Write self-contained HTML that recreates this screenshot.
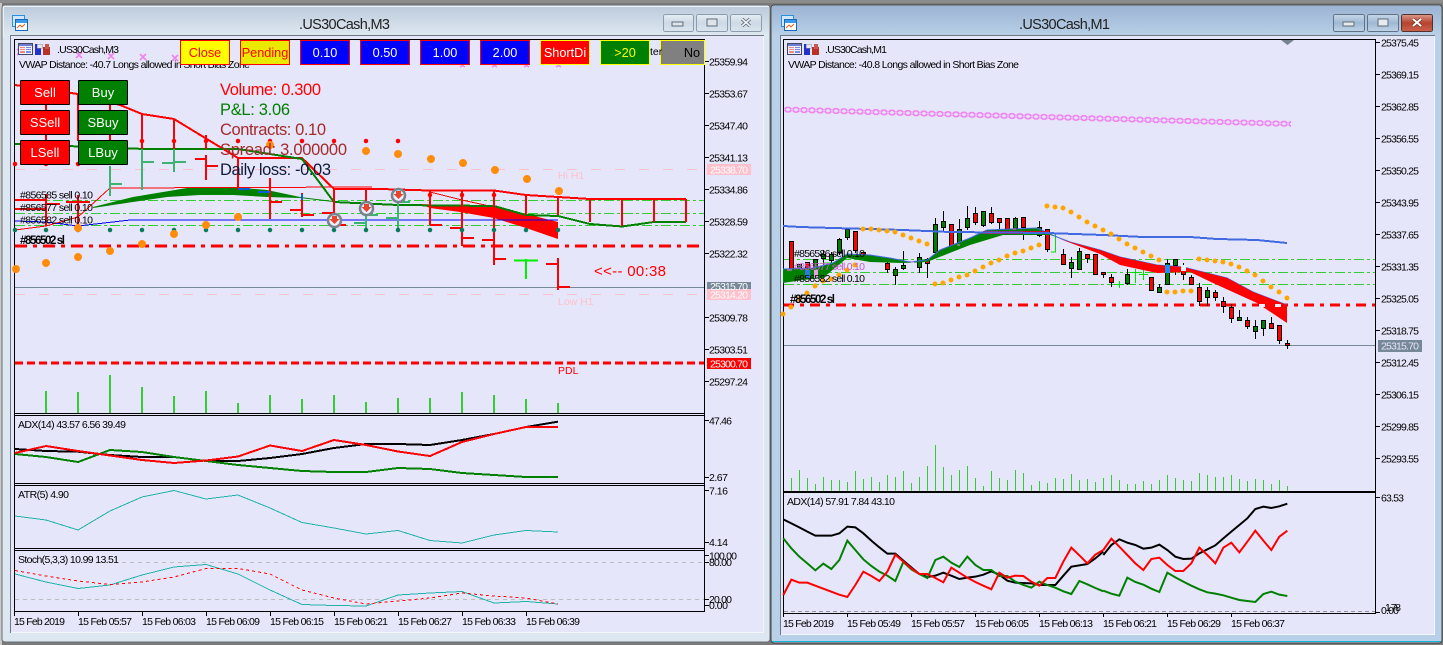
<!DOCTYPE html>
<html><head><meta charset="utf-8"><title>.US30Cash charts</title>
<style>
html,body{margin:0;padding:0;background:#6e6e6e;width:1443px;height:645px;overflow:hidden}
svg{display:block}
text{font-family:"Liberation Sans",sans-serif;font-size:10.5px;fill:#000}
.ax{font-size:10.5px}
.big{font-size:16.5px}
.btn{font-size:12.7px;text-anchor:middle}
.sb{font-size:13px;text-anchor:middle;fill:#fff}
.ti{font-size:14.5px;fill:#222}
.c{shape-rendering:crispEdges}
</style></head><body>
<svg width="1443" height="645" viewBox="0 0 1443 645" xmlns="http://www.w3.org/2000/svg">
<defs>
<linearGradient id="t1" x1="0" y1="0" x2="0" y2="1"><stop offset="0" stop-color="#bccadb"/><stop offset="1" stop-color="#dfe8f1"/></linearGradient>
<linearGradient id="t2" x1="0" y1="0" x2="0" y2="1"><stop offset="0" stop-color="#9bb4d2"/><stop offset="1" stop-color="#b9d0e8"/></linearGradient>
<linearGradient id="b1" x1="0" y1="0" x2="0" y2="1"><stop offset="0" stop-color="#e6edf4"/><stop offset=".5" stop-color="#cdd9e5"/><stop offset="1" stop-color="#dbe5ee"/></linearGradient>
<linearGradient id="b2" x1="0" y1="0" x2="0" y2="1"><stop offset="0" stop-color="#c8d8e9"/><stop offset=".5" stop-color="#9fb8d3"/><stop offset="1" stop-color="#c0d4e8"/></linearGradient>
<linearGradient id="b3" x1="0" y1="0" x2="0" y2="1"><stop offset="0" stop-color="#d99a8c"/><stop offset=".5" stop-color="#b8422e"/><stop offset="1" stop-color="#c9634e"/></linearGradient>
<pattern id="xp" width="8" height="6" patternUnits="userSpaceOnUse"><path d="M.5 .5L7.500 5.500M7.500 .5L.5 5.500" stroke="#ee82ee" stroke-width="1.800" fill="none"/></pattern>
</defs>

<!-- desktop edges -->
<rect width="1443" height="645" fill="#7a7a7a"/>
<rect y="0" width="1443" height="3" fill="#8c8c8c"/>
<rect x="0" y="3" width="2" height="642" fill="#c9c9c9"/>

<!-- LEFT WINDOW -->
<rect x="2" y="5" width="768" height="637" rx="3" fill="#dde7f1" stroke="#6b7076"/>
<rect x="3" y="6" width="766" height="30" fill="url(#t1)"/>
<path class="c" d="M3.500 37V6.500H769" stroke="#eef2f6" fill="none"/>
<rect x="10" y="35" width="754" height="598" fill="#e6e6fa"/>
<path class="c" d="M10.500 633V35.500H764" stroke="#6f7780" fill="none"/>
<path class="c" d="M763.500 36V632.500H11" stroke="#f4f6f8" fill="none"/>
<text class="ti" x="299" y="29" textLength="91">.US30Cash,M3</text>
<g class="c">
<rect x="12.500" y="15.500" width="12" height="11" fill="#cfe6fb" stroke="#2b8fe0"/>
<rect x="15.500" y="19.500" width="12" height="11" fill="#fff" stroke="#1769c0"/>
<rect x="16" y="20" width="11" height="3" fill="#3c9ae8"/>
</g>
<path d="M17 28l3-3 2 2 3-3" stroke="#e8641e" fill="none"/>
<g class="c" stroke="#8b9cae" fill="url(#b1)">
<rect x="663.500" y="14.500" width="30" height="17" rx="2"/>
<rect x="696.500" y="14.500" width="31" height="17" rx="2"/>
<rect x="730.500" y="14.500" width="31" height="17" rx="2"/>
</g>
<rect x="672" y="22" width="11" height="4" fill="#dfe4ea" stroke="#5e6b78"/>
<rect x="707" y="19" width="10" height="7" fill="#dfe4ea" stroke="#5e6b78"/>
<path d="M742 19l8 7M750 19l-8 7" stroke="#5e6b78" stroke-width="3.2"/>
<path d="M742 19l8 7M750 19l-8 7" stroke="#f0f2f5" stroke-width="1.6"/>

<!-- left chart frame -->
<g class="c" fill="none" stroke="#000">
<path d="M14.500 611.500V39.500H704.500V611.500H14.500"/>
<path d="M15 413.500H704M15 415.500H704M15 483.500H704M15 485.500H704M15 548.500H704M15 550.500H704"/>
<path d="M704 61.500h5M704 93.500h5M704 125.500h5M704 157.500h5M704 189.500h5M704 221.500h5M704 253.500h5M704 317.500h5M704 349.500h5M704 381.500h5M704 420.500h5M704 477.500h5M704 490.500h5M704 542.500h5M704 555.500h5M704 562.500h5M704 599.500h5M704 605.500h5"/>
<path d="M14.500 611v5M78.500 611v5M142.500 611v5M206.500 611v5M270.500 611v5M334.500 611v5M398.500 611v5M462.500 611v5M526.500 611v5"/>
</g>
<path d="M552 40h13l-6.500 5z" fill="#77838f"/>

<!-- left levels -->
<g class="c" fill="none">
<path d="M15 169.500H704M15 294.500H704" stroke="#ffc0cb" stroke-dasharray="10 14"/>
<path d="M15 200.500H704M15 213.500H704M15 225.500H704" stroke="#32cd32" stroke-dasharray="10 3 3 3"/>
<path d="M15 287.500H704" stroke="#778899"/>
<path d="M15 246H704" stroke="#f00" stroke-width="3" stroke-dasharray="12 6 4 6"/>
<path d="M15 363H704" stroke="#f00" stroke-width="3" stroke-dasharray="8 4"/>
<path d="M46 413V391M78 413V392M110 413V375M142 413V387M174 413V396M206 413V391M238 413V403M270 413V395M302 413V399M334 413V395M366 413V402M398 413V398M430 413V398M462 413V392M494 413V395M526 413V399M558 413V403" stroke="#32cd32" stroke-width="2"/>
</g>

<!-- left pink x marks -->
<path d="M17 49l6 6M23 49l-6 6M76 52l6 6M82 52l-6 6M108 53l6 6M114 53l-6 6M140 54l6 6M146 54l-6 6M172 55l6 6M178 55l-6 6M460 64l5 3M465 64l-5 3M492 64l5 3M497 64l-5 3M524 64l5 3M529 64l-5 3M556 64l5 3M561 64l-5 3" stroke="#ee82ee" stroke-width="1.600" fill="none"/>

<!-- left ribbons + MAs -->
<path d="M93 207L133 197L187 188L233 187L267 190L300 197L333 201L333 202L300 198L267 197L233 195L200 195L167 197L133 202L93 208z" fill="#008000"/>
<path d="M420 204L494 207L526 214L558 222L558 239L526 228L494 218L460 212L430 208z" fill="#f00"/>
<g fill="none" class="c">
<path d="M15 230L46 226L78 217L110 188L372 187" stroke="#f00"/>
<path d="M430 192L462 200L494 207" stroke="#f00"/>
<path d="M15 221L46 222L78 226L130 220H558" stroke="#00f"/>
<path d="M15 85L78 94L120 105L142 114L174 119L238 158H302L334 189H380L430 190.500H494L526 195L558 197L590 199H686" stroke="#f00" stroke-width="2"/>
<path d="M15 144L145 149L238 149L270 154L302 159L334 202L398 205L494 206L526 215L558 216L590 224L622 226.500L654 222H686" stroke="#008000" stroke-width="2"/>
<path d="M334 201V189M366 201V189" stroke="#f00" stroke-width="2"/>
<!-- red bars -->
<path stroke="#f00" stroke-width="2" d="M46 105V141M78 93V141M110 105V141M142 114V149M174 119V149M206 135V149M206 155V180M195 159H206M206 166H218M238 157V190M270 178V219M270 202H282M302 193V217M290 210H302M302 215H314M334 189V225M322 213H334M334 225H346M46 194V226M15 200H46M15 209H46M46 204H60M78 195V230M66 202H90M430 190V225M430 225H442M462 190V246M450 228H462M462 238H474M494 190V265M482 240H494M494 259H506M526 195V215M558 197V215M590 199V222M622 199V226M654 199V222M686 199V222M558 258V290M546 264H558M558 287H570"/>
<path stroke="#0b5fd6" stroke-width="2" d="M238 189H250M258 192H270M302 194V200"/>
<!-- green bars -->
<path stroke="#3cb371" stroke-width="2" d="M110 166V196M110 184H122M142 149V190M142 162H154M174 149V172M162 163H174M174 162H186M366 205V230M354 223H366M366 215H378M398 190V230M386 218H398M398 202H410"/>
<path stroke="#00ee00" stroke-width="2" d="M526 259V279M514 260.500H538"/>
</g>
<!-- left dots -->
<g fill="none" stroke-linecap="round">
<path stroke="#f00" stroke-width="4.500" d="M142 141h0M174 141h0M206 141h0M238 141h0M270 141h0M302 141h0M334 141h0M366 141h0M398 141h0M15 164h0M46 164h0M78 164h0M430 195h0M462 195h0M494 195h0"/>
<path stroke="#087b5a" stroke-width="4.500" d="M15 230h0M46 230h0M78 230h0M110 230h0M142 230h0M174 230h0M206 230h0M238 230h0M270 230h0M302 230h0M334 230h0M366 230h0M398 230h0M430 230h0M462 230h0M494 230h0M526 230h0M558 230h0"/>
<path stroke="#ff8c0a" stroke-width="8" d="M16 269h0M46 263h0M78 257h0M110 251h0M142 244h0M174 234h0M206 225h0M238 217h0M78 228h0M270 145h0M366 151h0M398 154h0M431 159h0M463 163h0M495 170h0M527 179h0M559 191h0"/>
</g>
<!-- sell markers -->
<g>
<circle cx="334.500" cy="220.500" r="6.500" fill="#eef" stroke="#77838f" stroke-width="2.500"/><path d="M332 216h5v3h2.500l-5 5-5-5h2.500z" fill="#e8452a"/>
<circle cx="366.500" cy="208.500" r="6.500" fill="#eef" stroke="#77838f" stroke-width="2.500"/><path d="M364 204h5v3h2.500l-5 5-5-5h2.500z" fill="#e8452a"/>
<circle cx="398.500" cy="195.500" r="6.500" fill="#eef" stroke="#77838f" stroke-width="2.500"/><path d="M396 191h5v3h2.500l-5 5-5-5h2.500z" fill="#e8452a"/>
</g>

<!-- left sub windows -->
<g fill="none" stroke-width="2" class="c">
<path stroke="#000" d="M15 449L46 451L78 451.700L110 455L142 457L174 457L206 461L238 461L270 458L302 454L334 448L366 444H398L430 445L462 440L494 434L526 427L558 421.700"/>
<path stroke="#008000" d="M15 454L46 457L78 462L110 450L142 452L174 457L206 461L238 465L270 468L302 471L334 472H366L398 468L430 469L462 473L494 475L526 477H558"/>
<path stroke="#f00" d="M15 453L46 446L78 451L110 455.500L142 460L174 463L206 460.500L238 456.500L270 445.500L302 451L334 440L366 445L398 451.500L430 456L462 442L494 434L526 427H558"/>
</g>
<path class="c" fill="none" stroke="#20b2aa" d="M15 516L46 520L78 530L110 511L142 497L174 490.500L206 499L238 495L270 508L302 522.500L334 528L366 534L398 530.500L430 540.500L462 543L494 535L526 530.500L558 532"/>
<path class="c" fill="none" stroke="#bdbdbd" stroke-dasharray="4 4" d="M122 562.500H704M15 599.500H704"/>
<path class="c" fill="none" stroke="#20b2aa" d="M15 574L46 582L78 588.500L110 585L142 575L174 567L206 564.500L238 574L270 590L302 604.500L334 605.500L366 606L398 595L430 593L462 591.500L494 603L526 601.500L558 604"/>
<path class="c" fill="none" stroke="#f00" stroke-dasharray="3 3" d="M15 570.500L46 576L78 581L110 584.500L142 582L174 577L206 568.500H238L270 574L302 590L334 598L366 604L398 601L430 598L462 593L494 596L526 598L558 604"/>

<!-- left text -->
<text x="57" y="53" textLength="62">.US30Cash,M3</text>
<text x="19" y="68" textLength="231">VWAP Distance: -40.7 Longs allowed in Short Bias Zone</text>
<text x="20" y="198.500" textLength="73">#856585 sell 0.10</text>
<text x="20" y="211" textLength="73">#856577 sell 0.10</text>
<text x="20" y="223.500" textLength="73">#856582 sell 0.10</text>
<text x="20" y="244" textLength="45" style="font-weight:bold;font-size:11.5px">#856502 sl</text>
<text class="big" x="220" y="95" fill="#f00" style="fill:#f00" textLength="101">Volume: 0.300</text>
<text class="big" x="220" y="115" style="fill:#008000" textLength="70">P&amp;L: 3.06</text>
<text class="big" x="220" y="135" style="fill:#a52a2a" textLength="106">Contracts: 0.10</text>
<text class="big" x="220" y="155" style="fill:#a52a2a" textLength="127">Spread: 3.000000</text>
<text class="big" x="220" y="175" style="fill:#111a3a" textLength="111">Daily loss: -0.03</text>
<text x="594" y="276" style="fill:#f00;font-size:15px" textLength="72">&lt;&lt;-- 00:38</text>
<text x="558" y="179" style="fill:#ffc0cb;font-size:10.5px">Hi H1</text>
<text x="558" y="305" style="fill:#ffc0cb;font-size:10.5px">Low H1</text>
<text x="558" y="374" style="fill:#f00;font-size:10.5px">PDL</text>
<text x="18" y="428" textLength="108">ADX(14) 43.57 6.56 39.49</text>
<text x="18" y="498" textLength="51">ATR(5) 4.90</text>
<text x="18" y="563" textLength="101">Stoch(5,3,3) 10.99 13.51</text>
<g>
<text x="14" y="625" textLength="51">15 Feb 2019</text>
<text x="78" y="625" textLength="54">15 Feb 05:57</text>
<text x="142" y="625" textLength="54">15 Feb 06:03</text>
<text x="206" y="625" textLength="54">15 Feb 06:09</text>
<text x="270" y="625" textLength="54">15 Feb 06:15</text>
<text x="334" y="625" textLength="54">15 Feb 06:21</text>
<text x="398" y="625" textLength="54">15 Feb 06:27</text>
<text x="462" y="625" textLength="54">15 Feb 06:33</text>
<text x="526" y="625" textLength="54">15 Feb 06:39</text>
</g>
<g class="c">
<rect x="707" y="164" width="44" height="11" fill="#ffc0cb"/>
<rect x="707" y="282" width="44" height="7" fill="#778899"/>
<rect x="707" y="289" width="44" height="11" fill="#ffc0cb"/>
<rect x="707" y="358" width="44" height="11" fill="#f00"/>
</g>
<g class="ax">
<text x="709" y="65.500" textLength="39">25359.94</text>
<text x="709" y="97.500" textLength="39">25353.67</text>
<text x="709" y="129.500" textLength="39">25347.40</text>
<text x="709" y="161.500" textLength="39">25341.13</text>
<text x="710" y="173.500" textLength="38" style="fill:#fff">25338.70</text>
<text x="709" y="193.500" textLength="39">25334.86</text>
<text x="709" y="225.500" textLength="39">25328.59</text>
<text x="709" y="257.500" textLength="39">25322.32</text>
<text x="710" y="290" textLength="38" style="fill:#fff">25315.70</text>
<text x="710" y="298.500" textLength="38" style="fill:#fff">25314.20</text>
<text x="709" y="321.500" textLength="39">25309.78</text>
<text x="709" y="353.500" textLength="39">25303.51</text>
<text x="710" y="367.500" textLength="38" style="fill:#fff">25300.70</text>
<text x="709" y="385.500" textLength="39">25297.24</text>
<text x="709" y="424.500" textLength="23">47.46</text>
<text x="709" y="481" textLength="19">2.67</text>
<text x="709" y="494.500" textLength="19">7.16</text>
<text x="709" y="546" textLength="19">4.14</text>
<text x="709" y="559.500" textLength="28">100.00</text>
<text x="709" y="566" textLength="23">80.00</text>
<text x="709" y="603" textLength="23">20.00</text>
<text x="709" y="609" textLength="19">0.00</text>
</g>

<!-- chart icons left -->
<g class="c">
<rect x="18.500" y="43.500" width="14" height="11" fill="#eef" stroke="#44446a"/>
<rect x="19" y="44" width="13" height="2" fill="#6f7fd0"/>
<rect x="20" y="47" width="5" height="1" fill="#f08a80"/><rect x="20" y="49" width="5" height="1" fill="#f08a80"/><rect x="20" y="51" width="5" height="2" fill="#f08a80"/>
<rect x="26" y="47" width="5" height="1" fill="#7a8ce0"/><rect x="26" y="49" width="5" height="1" fill="#7a8ce0"/><rect x="26" y="51" width="5" height="2" fill="#7a8ce0"/>
<rect x="35" y="44" width="6" height="11" fill="#2233cc"/><rect x="37" y="44" width="5" height="4" fill="#e6e6fa" stroke="#888" stroke-width=".5"/>
<rect x="43" y="47" width="7" height="8" fill="#b83228"/><rect x="45" y="44" width="4" height="5" fill="#c8584e"/>
</g>

<!-- left buttons -->
<g class="c">
<rect x="20.500" y="80.500" width="49" height="24" rx="1" fill="#f00" stroke="#000"/>
<rect x="20.500" y="110.500" width="49" height="24" rx="1" fill="#f00" stroke="#000"/>
<rect x="20.500" y="140.500" width="49" height="24" rx="1" fill="#f00" stroke="#000"/>
<rect x="78.500" y="80.500" width="49" height="24" rx="1" fill="#008000" stroke="#000"/>
<rect x="78.500" y="110.500" width="49" height="24" rx="1" fill="#008000" stroke="#000"/>
<rect x="78.500" y="140.500" width="49" height="24" rx="1" fill="#008000" stroke="#000"/>
<rect x="180.500" y="40.500" width="49" height="24" fill="#ff0" stroke="#f00"/>
<rect x="240.500" y="40.500" width="49" height="24" fill="#eaea00" stroke="#f00"/>
<rect x="300.500" y="40.500" width="49" height="24" fill="#00f" stroke="#f00"/>
<rect x="360.500" y="40.500" width="49" height="24" fill="#00f" stroke="#f00"/>
<rect x="420.500" y="40.500" width="49" height="24" fill="#00f" stroke="#f00"/>
<rect x="480.500" y="40.500" width="49" height="24" fill="#00f" stroke="#f00"/>
<rect x="540.500" y="40.500" width="49" height="24" fill="#f00" stroke="#ff0"/>
<rect x="600.500" y="40.500" width="49" height="24" fill="#008000" stroke="#ff0"/>
<rect x="660.500" y="40.500" width="44" height="24" fill="#808080" stroke="#ff0"/>
</g>
<text class="sb" x="45" y="97">Sell</text><text class="sb" x="45" y="127">SSell</text><text class="sb" x="45" y="157">LSell</text>
<text class="sb" x="103" y="97">Buy</text><text class="sb" x="103" y="127">SBuy</text><text class="sb" x="103" y="157">LBuy</text>
<text class="btn" x="205" y="57" style="fill:#f00">Close</text>
<text class="btn" x="265" y="57" style="fill:#f00">Pending</text>
<text class="btn" x="325" y="57" style="fill:#fff">0.10</text>
<text class="btn" x="385" y="57" style="fill:#fff">0.50</text>
<text class="btn" x="445" y="57" style="fill:#fff">1.00</text>
<text class="btn" x="505" y="57" style="fill:#fff">2.00</text>
<text class="btn" x="565" y="57" style="fill:#fff">ShortDi</text>
<text class="btn" x="625" y="57" style="fill:#ff0">&gt;20</text>
<text x="650" y="55" style="font-size:10.5px">ter</text>
<text class="btn" x="692" y="57">No</text>

<!-- RIGHT WINDOW -->
<rect x="771" y="5" width="671" height="638" rx="3" fill="#b9d1e8" stroke="#3e4347"/>
<rect x="772" y="6" width="669" height="30" fill="url(#t2)"/>
<path class="c" d="M772 641.500H1441" stroke="#1ab6d8"/>
<rect x="780" y="35" width="655" height="600" fill="#e6e6fa"/>
<path class="c" d="M780.500 635V35.500H1435" stroke="#6f7780" fill="none"/>
<path class="c" d="M1434.500 36V634.500H781" stroke="#f4f6f8" fill="none"/>
<text class="ti" x="1019" y="29" textLength="91">.US30Cash,M1</text>
<g class="c">
<rect x="781.500" y="15.500" width="12" height="11" fill="#cfe6fb" stroke="#2b8fe0"/>
<rect x="784.500" y="19.500" width="12" height="11" fill="#fff" stroke="#1769c0"/>
<rect x="785" y="20" width="11" height="3" fill="#3c9ae8"/>
</g>
<path d="M786 28l3-3 2 2 3-3" stroke="#e8641e" fill="none"/>
<g class="c">
<rect x="1333.500" y="14.500" width="31" height="17" rx="2" fill="url(#b2)" stroke="#5f7288"/>
<rect x="1367.500" y="14.500" width="31" height="17" rx="2" fill="url(#b2)" stroke="#5f7288"/>
<rect x="1401.500" y="14.500" width="31" height="17" rx="2" fill="url(#b3)" stroke="#54312b"/>
</g>
<rect x="1343" y="22" width="11" height="4" fill="#e6ebf1" stroke="#5e6b78"/>
<rect x="1378" y="19" width="10" height="7" fill="#e6ebf1" stroke="#5e6b78"/>
<path d="M1413 19l8 7M1421 19l-8 7" stroke="#6e2f23" stroke-width="3.400"/>
<path d="M1413 19l8 7M1421 19l-8 7" stroke="#fff" stroke-width="2"/>

<g class="c" fill="none" stroke="#000">
<path d="M783.500 613.500V39.500H1375.500V613.500H783.500"/>
<path d="M784 491.500H1375M784 492.500H1375"/>
<path d="M1375 42.500h5M1375 74.500h5M1375 106.500h5M1375 138.500h5M1375 170.500h5M1375 202.500h5M1375 234.500h5M1375 266.500h5M1375 298.500h5M1375 330.500h5M1375 362.500h5M1375 394.500h5M1375 426.500h5M1375 458.500h5M1375 497.500h5M1375 612.500h5"/>
<path d="M783.500 613v4M847.500 613v4M911.500 613v4M975.500 613v4M1039.500 613v4M1103.500 613v4M1167.500 613v4M1231.500 613v4"/>
</g>
<path d="M1281 40h13l-6.500 5z" fill="#77838f"/>

<g class="c" fill="none">
<path d="M784 259.500H1375M784 272.500H1375M784 284.500H1375" stroke="#32cd32" stroke-dasharray="10 3 3 3"/>
<path d="M784 305H1375" stroke="#f00" stroke-width="3" stroke-dasharray="10 6 4 6"/>
<path d="M784 345.500H1375" stroke="#778899"/>
<path d="M784 611.500H1375" stroke="#8f8f9f" stroke-dasharray="4 3"/>
<path stroke="#32cd32" d="M791.500 491V478M799.500 491V470M807.500 491V478M815.500 491V484M823.500 491V477M831.500 491V480M839.500 491V480M847.500 491V482M855.500 491V471M863.500 491V479M871.500 491V477M879.500 491V482M887.500 491V475M895.500 491V477M903.500 491V471M911.500 491V483M919.500 491V477M927.500 491V466M935.500 491V445M943.500 491V467M951.500 491V475M959.500 491V470M967.500 491V466M975.500 491V478M983.500 491V486M991.500 491V471M999.500 491V478M1007.500 491V480M1015.500 491V470M1023.500 491V473M1031.500 491V485M1039.500 491V481M1047.500 491V483M1055.500 491V478M1063.500 491V479M1071.500 491V474M1079.500 491V480M1087.500 491V479M1095.500 491V482M1103.500 491V478M1111.500 491V475M1119.500 491V480M1127.500 491V484M1135.500 491V484M1143.500 491V481M1151.500 491V484M1159.500 491V480M1167.500 491V475M1175.500 491V478M1183.500 491V480M1191.500 491V481M1199.500 491V473M1207.500 491V475M1215.500 491V477M1223.500 491V477M1231.500 491V475M1239.500 491V479M1247.500 491V481M1255.500 491V479M1263.500 491V480M1271.500 491V484M1279.500 491V480M1287.500 491V486"/>
</g>
<!-- pink x band -->
<g transform="translate(784,109.500) skewY(1.63)"><rect x="0" y="-3" width="507" height="6" fill="url(#xp)"/></g>

<!-- candles -->
<path class="c" stroke="#000" fill="none" d="M823.500 250V267M831.500 252V267M839.500 238V255M847.500 229V240M855.500 231V253M887.500 262V273M895.500 267V285M903.500 251V270M919.500 253V273M927.500 258V278M935.500 218V255M943.500 211V231M951.500 224V248M959.500 219V249M967.500 206V230M975.500 207V225M983.500 211V227M991.500 207V224M999.500 218V230M1015.500 217V235M1023.500 217V240M1039.500 221V237M1047.500 229V252M1063.500 249V264M1071.500 257V278M1079.500 248V270M1087.500 254V263M1103.500 272V278M1111.500 274V287M1127.500 269V285M1151.500 277V291M1159.500 284V293M1167.500 259V285M1175.500 259V275M1183.500 263V280M1191.500 275V285M1199.500 283V306M1207.500 287V306M1215.500 290V301M1223.500 297V313M1231.500 304V323M1239.500 310V320M1247.500 317V329M1255.500 320V339M1263.500 320V336M1271.500 317V328M1279.500 325V344M1287.500 340V349"/>
<path class="c" stroke="#000" fill="#008000" d="M797.500 264.500h4v7h-4zM813.500 259.500h4v18h-4zM821.500 254.500h4v4h-4zM829.500 254.500h4v6h-4zM837.500 239.500h4v13h-4zM845.500 229.500h4v8h-4zM893.500 269.500h4v6h-4zM901.500 265.500h4v3h-4zM917.500 257.500h4v10h-4zM933.500 224.500h4v28h-4zM941.500 221.500h4v6h-4zM957.500 229.500h4v16h-4zM965.500 218.500h4v9h-4zM981.500 211.500h4v14h-4zM1013.500 218.500h4v10h-4zM1037.500 227.500h4v8h-4zM1069.500 262.500h4v6h-4zM1077.500 251.500h4v18h-4zM1125.500 274.500h4v9h-4zM1157.500 287.500h4v5h-4zM1165.500 263.500h4v21h-4zM1173.500 259.500h4v6h-4zM1205.500 290.500h4v7h-4zM1237.500 317.500h4v3h-4zM1253.500 326.500h4v5h-4zM1261.500 320.500h4v8h-4z"/>
<path class="c" stroke="#000" fill="#f00" d="M789.500 241.500h4v30h-4zM805.500 262.500h4v15h-4zM853.500 231.500h4v19h-4zM861.500 252.500h4v3h-4zM885.500 263.500h4v6h-4zM925.500 259.500h4v4h-4zM949.500 224.500h4v21h-4zM973.500 213.500h4v9h-4zM989.500 213.500h4v9h-4zM997.500 218.500h4v4h-4zM1005.500 218.500h4v12h-4zM1021.500 217.500h4v10h-4zM1045.500 229.500h4v20h-4zM1061.500 254.500h4v10h-4zM1085.500 254.500h4v4h-4zM1093.500 254.500h4v20h-4zM1101.500 272.500h4v2h-4zM1109.500 277.500h4v5h-4zM1149.500 277.500h4v13h-4zM1181.500 265.500h4v9h-4zM1189.500 277.500h4v7h-4zM1197.500 287.500h4v14h-4zM1213.500 292.500h4v5h-4zM1221.500 301.500h4v5h-4zM1229.500 307.500h4v11h-4zM1245.500 320.500h4v6h-4zM1269.500 323.500h4v5h-4zM1277.500 325.500h4v15h-4zM1285.500 343.500h4v2h-4z"/>
<path class="c" stroke="#00e000" fill="none" d="M1055.500 233V252M1051 252h5M1119.500 281V288M1115 284.500h9M1135.500 269V283M1131 272.500h9M1143.500 270V280M1139 274.500h9M823 263h20"/>

<!-- ribbons -->
<path fill="#008000" d="M783 269L813 268L833 263L847 254L870 255L890 258L910 262L927 260L940 250L970 238L987 230L1037 228L1057 237L1050 235L1003 235L970 245L937 258L927 262L903 263L870 262L847 258L823 278L803 280L783 283z"/>
<path fill="none" stroke="#4169e1" d="M783 269L813 268L833 263L847 254L870 255L890 258L910 262L927 260L940 250L970 238L987 230L1037 228L1057 237L1070 242L1100 250L1120 257L1157 265L1183 267L1227 278L1253 292L1287 305"/>
<path fill="#c8102e" d="M983 231H1047V234H983z"/>
<path fill="#f00" d="M1060 239L1070 242L1100 250L1120 257L1157 265L1183 267L1227 278L1253 292L1287 305V323L1257 303L1213 283L1190 272L1157 273L1120 265L1100 254z"/>
<g class="c">
<rect x="1165" y="265" width="5" height="8" fill="#1e8fff"/>
<rect x="1181" y="265" width="5" height="6" fill="#dff2ff"/>
<rect x="1259" y="304" width="6" height="3" fill="#eef"/>
<rect x="1275" y="304" width="6" height="3" fill="#eef"/>
<rect x="805" y="270" width="5" height="8" fill="#2a7ae8"/>
<rect x="814" y="270" width="4" height="8" fill="#e6a6e6"/>
</g>
<path class="c" fill="none" stroke="#ee82ee" d="M787 270h5M911 262h3M957 245h3M1013 229h3"/>
<!-- blue MA -->
<path class="c" fill="none" stroke="#4169e1" stroke-width="2" d="M783 226L800 227L833 228L903 230L950 232L1047 233L1103 235L1143 237L1190 237L1217 239L1257 240L1287 243"/>
<!-- right orange dots -->
<path fill="none" stroke="#ffa500" stroke-width="5" stroke-linecap="round" d="M783 314h0M791 307h0M799 299h0M807 293h0M815 286h0M823 281h0M831 279h0M839 275h0M847 270h0M855 265h0M863 229h0M871 229h0M879 230h0M887 231h0M895 232h0M903 235h0M911 238h0M919 241h0M927 244h0M935 284h0M943 283h0M951 280h0M959 277h0M967 275h0M975 271h0M983 267h0M991 263h0M999 260h0M1007 256h0M1015 253h0M1023 251h0M1031 248h0M1039 245h0M1047 206h0M1055 207h0M1063 208h0M1071 212h0M1079 217h0M1087 222h0M1095 226h0M1103 230h0M1111 234h0M1119 239h0M1127 244h0M1135 248h0M1143 252h0M1151 256h0M1159 260h0M1167 292h0M1175 292h0M1183 291h0M1191 291h0M1199 259h0M1207 260h0M1215 261h0M1223 262h0M1231 264h0M1239 267h0M1247 271h0M1255 275h0M1263 281h0M1271 287h0M1279 292h0M1287 298h0"/>

<!-- right ADX -->
<g transform="translate(770,430) scale(.33333)" fill="none" stroke-width="6">
<path stroke="#000" d="M40 268L64 280L88 292L112 305L136 317H184L208 310L232 290L256 292L280 310L304 332L328 352L352 371H376L400 392L424 412L448 432L472 441L496 437L520 428L544 437L568 447L592 443L616 440L640 434L664 424L688 434L712 452L736 458L784 460L808 465H856L880 437L904 410L928 406L952 402L976 385L1000 365"/>
<path stroke="#008000" d="M40 325L64 355L88 380L112 400L136 421L160 401L184 417L208 390L232 332L256 360L280 388L304 408L328 425L352 437L376 453L400 396L424 418L448 432L472 444L496 390L520 380L544 398L568 411L592 380L616 405L640 420H664L688 438H712L736 455L760 465L784 473L808 455L832 465L856 473L880 484L904 492L928 453L952 463L976 474L1000 484"/>
<path stroke="#f00" d="M40 495L64 449L88 458H112L136 467L160 476L184 485L208 494L232 501L256 465L280 425L304 438L328 453L352 425L376 374L400 395L424 415L448 432H472L496 444L520 457L544 413L568 428L592 443L616 456L640 467L664 478L688 428L712 443L736 437L760 438L784 455L808 467L832 444H856L880 395L904 353L928 376L952 400L976 374L1000 360"/>
</g>
<g transform="translate(1100,430) scale(.33333)" fill="none" stroke-width="6">
<path stroke="#000" d="M10 375L34 345L58 328L82 338L106 345L130 356L154 353L178 344L202 360L226 380L250 387L274 386L298 370L322 358L346 346L370 325L394 305L418 285L442 265L466 237L490 230L514 234L538 229L562 221"/>
<path stroke="#008000" d="M10 482L34 491L58 497L82 443L106 456L130 464L154 476L178 486L202 428L226 442L250 455L274 467L298 478L322 487L346 491L370 496L394 503L418 510L442 513L466 516L490 492L514 485L538 494L562 498"/>
<path stroke="#f00" d="M10 360L34 326L58 350L82 375L106 400L130 420L154 387L178 383L202 405L226 423H250L274 400L298 353L322 375L346 400L370 353L394 338L418 367L442 335L466 302L490 332L514 360L538 320L562 302"/>
</g>

<!-- right text -->
<text x="825" y="53" textLength="62">.US30Cash,M1</text>
<text x="788" y="68" textLength="231">VWAP Distance: -40.8 Longs allowed in Short Bias Zone</text>
<text x="794" y="257" textLength="71">#856586 sell 0.10</text>
<text x="794" y="270" textLength="71" style="fill:#c65fc6">#856577 sell 0.10</text>
<text x="794" y="282" textLength="71">#856582 sell 0.10</text>
<text x="790" y="303" textLength="45" style="font-weight:bold;font-size:11.5px">#856502 sl</text>
<text x="787" y="505" textLength="108">ADX(14) 57.91 7.84 43.10</text>
<g>
<text x="783" y="627" textLength="51">15 Feb 2019</text>
<text x="847" y="627" textLength="54">15 Feb 05:49</text>
<text x="911" y="627" textLength="54">15 Feb 05:57</text>
<text x="975" y="627" textLength="54">15 Feb 06:05</text>
<text x="1039" y="627" textLength="54">15 Feb 06:13</text>
<text x="1103" y="627" textLength="54">15 Feb 06:21</text>
<text x="1167" y="627" textLength="54">15 Feb 06:29</text>
<text x="1231" y="627" textLength="54">15 Feb 06:37</text>
</g>
<rect class="c" x="1378" y="340" width="44" height="12" fill="#778899"/>
<g class="ax">
<text x="1381" y="46.500" textLength="38">25375.45</text>
<text x="1381" y="78.500" textLength="38">25369.15</text>
<text x="1381" y="110.500" textLength="38">25362.85</text>
<text x="1381" y="142.500" textLength="38">25356.55</text>
<text x="1381" y="174.500" textLength="38">25350.25</text>
<text x="1381" y="206.500" textLength="38">25343.95</text>
<text x="1381" y="238.500" textLength="38">25337.65</text>
<text x="1381" y="270.500" textLength="38">25331.35</text>
<text x="1381" y="302.500" textLength="38">25325.05</text>
<text x="1381" y="334.500" textLength="38">25318.75</text>
<text x="1381" y="349.500" textLength="38" style="fill:#e6e6fa">25315.70</text>
<text x="1381" y="366.500" textLength="38">25312.45</text>
<text x="1381" y="398.500" textLength="38">25306.15</text>
<text x="1381" y="430.500" textLength="38">25299.85</text>
<text x="1381" y="462.500" textLength="38">25293.55</text>
<text x="1381" y="501.500" textLength="23">63.53</text>
<text x="1385" y="611" textLength="16">1.78</text>
<text x="1381" y="614" textLength="18">0.00</text>
</g>
<g class="c">
<rect x="787.500" y="43.500" width="14" height="11" fill="#eef" stroke="#44446a"/>
<rect x="788" y="44" width="13" height="2" fill="#6f7fd0"/>
<rect x="789" y="47" width="5" height="1" fill="#f08a80"/><rect x="789" y="49" width="5" height="1" fill="#f08a80"/><rect x="789" y="51" width="5" height="2" fill="#f08a80"/>
<rect x="795" y="47" width="5" height="1" fill="#7a8ce0"/><rect x="795" y="49" width="5" height="1" fill="#7a8ce0"/><rect x="795" y="51" width="5" height="2" fill="#7a8ce0"/>
<rect x="804" y="44" width="6" height="11" fill="#2233cc"/><rect x="806" y="44" width="5" height="4" fill="#e6e6fa" stroke="#888" stroke-width=".5"/>
<rect x="812" y="47" width="7" height="8" fill="#b83228"/><rect x="814" y="44" width="4" height="5" fill="#c8584e"/>
</g>
</svg>
</body></html>
